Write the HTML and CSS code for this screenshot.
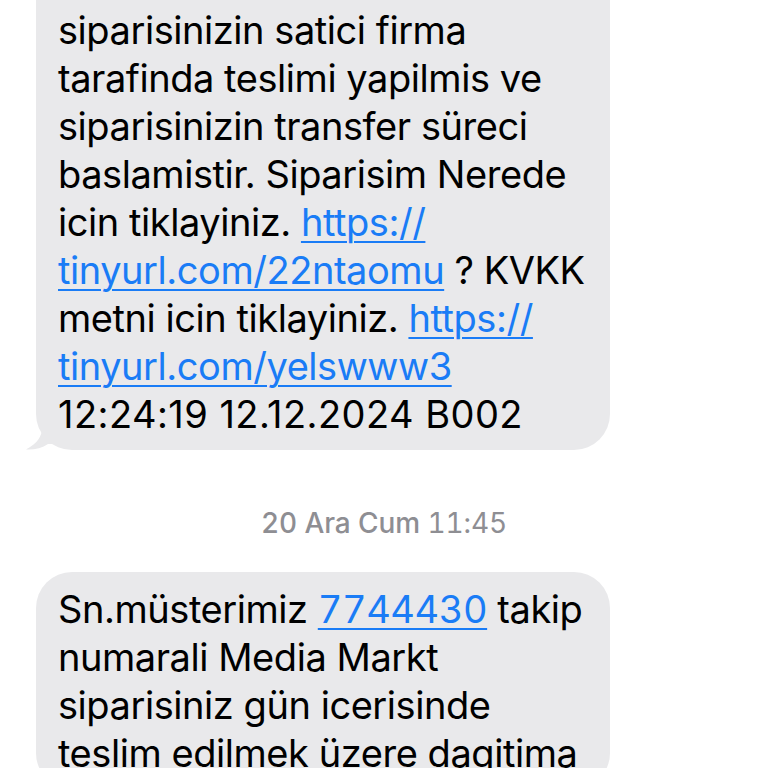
FILE: index.html
```html
<!DOCTYPE html>
<html lang="tr">
<head>
<meta charset="utf-8">
<title>Mesajlar</title>
<link rel="stylesheet" href="styles.css">
</head>
<body>
<main class="thread">
  <div class="bubble bubble-first">
    <p class="msg">siparisinizin satici firma<br>tarafinda teslimi yapilmis ve<br>siparisinizin transfer süreci<br>baslamistir. Siparisim Nerede<br>icin tiklayiniz. <a class="link" href="#">https://<br>tinyurl.com/22ntaomu</a> ? KVKK<br>metni icin tiklayiniz. <a class="link" href="#">https://<br>tinyurl.com/yelswww3</a><br><span class="code">12:24:19 12.12.2024 B002</span></p>
    <svg class="tail" width="30" height="22" viewBox="0 0 30 22" aria-hidden="true"><path d="M16 0 C16 8 12 15 0 21.5 C8 22 16 20 22 16 L30 16 L30 0 Z" fill="#e9e9eb"/></svg>
  </div>
  <div class="stamp"><span class="stamp-date">20 Ara Cum</span> <span class="stamp-time">11:45</span></div>
  <div class="bubble">
    <p class="msg">Sn.müsterimiz <a class="link num" href="#">7744430</a> takip<br>numarali Media Markt<br>siparisiniz gün icerisinde<br>teslim edilmek üzere dagitima</p>
  </div>
</main>
</body>
</html>
```
FILE: styles.css
```css
html, body {
  margin: 0;
  padding: 0;
  background: #ffffff;
}
body {
  width: 768px;
  height: 768px;
  overflow: hidden;
  font-family: Inter, "Noto Sans", sans-serif;
  color: #000000;
}
.thread {
  display: flex;
  flex-direction: column;
  align-items: flex-start;
}
.bubble {
  position: relative;
  box-sizing: border-box;
  width: 574px;
  margin-left: 36px;
  padding: 13px 22px 12px 22px;
  background: #e9e9eb;
  border-radius: 36px;
}
.bubble-first {
  margin-top: -46px;
  padding-top: 52px;
  border-radius: 0 0 36px 36px;
}
.msg {
  margin: 0;
  font-size: 38px;
  line-height: 48px;
  letter-spacing: -0.45px;
  white-space: nowrap;
}
.num {
  font-feature-settings: "tnum" 1;
}
.code {
  letter-spacing: 0.45px;
}
.link {
  color: #1a7cf6;
  text-decoration: underline;
  text-decoration-thickness: 2px;
  text-underline-offset: 5px;
}
.tail {
  position: absolute;
  left: -10px;
  bottom: 0;
}
.stamp {
  align-self: center;
  margin: 57px 0 33px 0;
  font-size: 28px;
  line-height: 32px;
  color: #8e8e93;
  letter-spacing: -0.1px;
  font-feature-settings: "tnum" 1;
}
.stamp-date {
  font-weight: 500;
}
.stamp-time {
  font-weight: 400;
}
```
